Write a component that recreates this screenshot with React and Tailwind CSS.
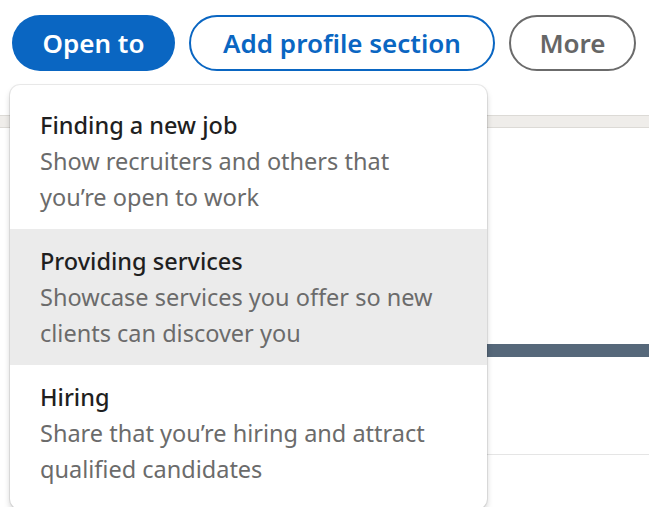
import React from 'react';

const options = [
  { title: 'Finding a new job', desc: ['Show recruiters and others that', 'you’re open to work'] },
  { title: 'Providing services', desc: ['Showcase services you offer so new', 'clients can discover you'], active: true },
  { title: 'Hiring', desc: ['Share that you’re hiring and attract', 'qualified candidates'] },
];

export default function App() {
  return (
    <div
      className="relative w-[649px] h-[507px] overflow-hidden bg-white"
      style={{ fontFamily: '"Noto Sans", "Open Sans", sans-serif' }}
    >
      {/* Profile actions */}
      <div className="flex items-center gap-[14px] pl-[12px] pt-[15px]">
        <button className="h-[56px] w-[163px] rounded-full bg-[#0a66c2] text-[26px] font-semibold text-white">
          Open to
        </button>
        <button className="h-[56px] w-[306px] rounded-full border-2 border-[#0a66c2] text-[26px] font-semibold text-[#0a66c2]">
          Add profile section
        </button>
        <button className="h-[56px] w-[127px] rounded-full border-2 border-[#6b6b6b] text-[26px] font-semibold text-[#666666]">
          More
        </button>
      </div>

      {/* Page behind the menu */}
      <div className="mt-[44px] h-[13px] border-y border-[#dcdad6] bg-[#efedea]" />
      <div className="mt-[216px] ml-[487px] h-[13px] bg-[#56687a]" />
      <div className="mt-[97px] ml-[487px] h-px bg-[#e5e5e5]" />

      {/* Open to menu */}
      <div className="absolute left-[10px] top-[85px] w-[477px] rounded-[10px] bg-white py-[8px] shadow-[0_0_0_1px_rgba(0,0,0,0.08),0_4px_6px_rgba(0,0,0,0.18)]">
        {options.map((o) => (
          <div
            key={o.title}
            className={`h-[136px] px-[30px] pt-[14px] text-[23.5px] leading-[36px] ${o.active ? 'bg-[#ebebeb]' : ''}`}
          >
            <div className="font-medium text-[#1f1f1f]">{o.title}</div>
            {o.desc.map((d) => (
              <div key={d} className="text-[#6b6b6b]">{d}</div>
            ))}
          </div>
        ))}
      </div>
    </div>
  );
}
